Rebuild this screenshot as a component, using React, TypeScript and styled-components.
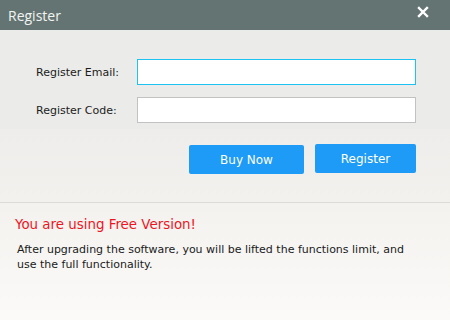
import React, { useState } from 'react';
import styled, { createGlobalStyle } from 'styled-components';

const GlobalStyle = createGlobalStyle`
  html, body {
    margin: 0;
    padding: 0;
    background: #fbfaf8;
  }
  * {
    box-sizing: border-box;
  }
`;

const Window = styled.div`
  width: 450px;
  height: 320px;
  display: flex;
  flex-direction: column;
  font-family: "DejaVu Sans", "Liberation Sans", sans-serif;
  overflow: hidden;
`;

const TitleBar = styled.div`
  height: 30px;
  flex: none;
  background: #647472;
  display: flex;
  align-items: center;
  justify-content: space-between;
  padding: 0 20px 0 8px;
`;

const Title = styled.div`
  font-family: "Open Sans", "DejaVu Sans", sans-serif;
  font-size: 14px;
  color: #f2f4f3;
  margin-top: 1px;
`;

const CloseButton = styled.button`
  width: 14px;
  height: 14px;
  padding: 0;
  border: none;
  background: none;
  cursor: pointer;
  display: flex;
  align-items: center;
  justify-content: center;
  margin-top: -6px;
`;

const FormArea = styled.div`
  background: #ebebe9;
  height: 99px;
  flex: none;
  padding: 29px 0 0 36px;
  display: grid;
  grid-template-columns: 80px 279px;
  grid-auto-rows: 26px;
  column-gap: 21px;
  row-gap: 12px;
  align-items: center;
`;

const Label = styled.label`
  font-size: 11px;
  color: #1c1c1c;
  white-space: nowrap;
`;

const TextInput = styled.input<{ focused?: boolean }>`
  width: 279px;
  height: 26px;
  border: 1px solid ${p => (p.focused ? '#1ec2f2' : '#c2c2c2')};
  background: #fff;
  outline: none;
  padding: 0 4px;
  font-family: "DejaVu Sans", sans-serif;
  font-size: 12px;
  caret-color: #000;
`;

const ButtonArea = styled.div`
  height: 74px;
  flex: none;
  background: linear-gradient(#eeedeb, #f2f1ee);
  border-bottom: 1px solid #dcdbd8;
  display: flex;
  justify-content: flex-end;
  align-items: flex-start;
  gap: 11px;
  padding: 15px 34px 0 0;
`;

const ActionButton = styled.button<{ w: number; offset?: number }>`
  width: ${p => p.w}px;
  height: 29px;
  margin-top: ${p => p.offset || 0}px;
  background: #1e9bf6;
  border: none;
  border-radius: 2px;
  color: #fff;
  font-family: "DejaVu Sans", sans-serif;
  font-size: 12px;
  cursor: pointer;
`;

const InfoArea = styled.div`
  flex: 1;
  background: linear-gradient(#f3f2ef, #fbfaf8);
  padding: 13px 15px 0 15px;
`;

const Warning = styled.div`
  color: #f0141e;
  font-size: 13.4px;
  line-height: 18px;
`;

const Description = styled.p`
  margin: 8px 0 0 2px;
  font-size: 11px;
  line-height: 15px;
  color: #1a1a1a;
  width: 400px;
`;

const CloseIcon = () => (
  <svg width="12" height="12" viewBox="0 0 12 12">
    <path d="M2 2 L10 10 M10 2 L2 10" stroke="#ffffff" strokeWidth="2.4" strokeLinecap="square" />
  </svg>
);

const App: React.FC = () => {
  const [email, setEmail] = useState('');
  const [code, setCode] = useState('');

  return (
    <Window>
      <GlobalStyle />
      <TitleBar>
        <Title>Register</Title>
        <CloseButton>
          <CloseIcon />
        </CloseButton>
      </TitleBar>
      <FormArea>
        <Label>Register Email:</Label>
        <TextInput focused autoFocus value={email} onChange={e => setEmail(e.target.value)} />
        <Label>Register Code:</Label>
        <TextInput value={code} onChange={e => setCode(e.target.value)} />
      </FormArea>
      <ButtonArea>
        <ActionButton w={115} offset={1}>Buy Now</ActionButton>
        <ActionButton w={101}>Register</ActionButton>
      </ButtonArea>
      <InfoArea>
        <Warning>You are using Free Version!</Warning>
        <Description>
          After upgrading the software, you will be lifted the functions limit, and use the full functionality.
        </Description>
      </InfoArea>
    </Window>
  );
};

export default App;
